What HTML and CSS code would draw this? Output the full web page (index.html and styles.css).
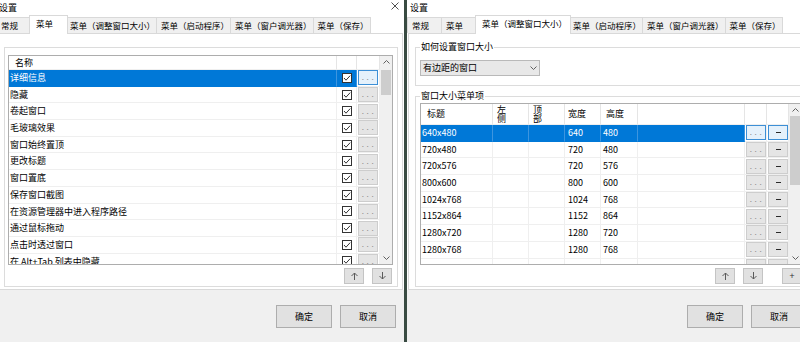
FILE: index.html
```html
<!DOCTYPE html>
<html lang="zh-CN">
<head>
<meta charset="utf-8">
<title>设置</title>
<link rel="stylesheet" href="styles.css">
</head>
<body>
<div class="screen">
  <section class="win win-left">
    <header class="titlebar">
      <span class="title">设置</span>
      <svg class="close" width="8" height="8" viewBox="0 0 8 8"><path d="M0.5 0.5L7.5 7.5M7.5 0.5L0.5 7.5" stroke="#3c3c3c" stroke-width="0.9" fill="none"/></svg>
    </header>
    <nav class="tabs">
      <div class="tab first">常规</div>
      <div class="tab sel">菜单</div>
      <div class="tab">菜单（调整窗口大小）</div>
      <div class="tab">菜单（启动程序）</div>
      <div class="tab">菜单（窗户调光器）</div>
      <div class="tab">菜单（保存）</div>
    </nav>
    <div class="page page-left">
      <div class="grp">
        <div class="lb lb-left">
          <div class="lb-rows">
            <div class="row row-l head"><div class="c h hname">名称</div><div class="c h"></div><div class="c h"></div></div>
            <div class="row row-l sel"><div class="c t">详细信息</div><div class="c cbc"><svg width="10" height="10" viewBox="0 0 10 10"><rect x="0.5" y="0.5" width="9" height="9" fill="#fff" stroke="#333"/><path d="M2 5L4 7.2L8.2 2.6" fill="none" stroke="#333"/></svg></div><div class="c bc"><span class="dots">...</span></div></div>
            <div class="row row-l"><div class="c t">隐藏</div><div class="c cbc"><svg width="10" height="10" viewBox="0 0 10 10"><rect x="0.5" y="0.5" width="9" height="9" fill="#fff" stroke="#333"/><path d="M2 5L4 7.2L8.2 2.6" fill="none" stroke="#333"/></svg></div><div class="c bc"><span class="dots">...</span></div></div>
            <div class="row row-l"><div class="c t">卷起窗口</div><div class="c cbc"><svg width="10" height="10" viewBox="0 0 10 10"><rect x="0.5" y="0.5" width="9" height="9" fill="#fff" stroke="#333"/><path d="M2 5L4 7.2L8.2 2.6" fill="none" stroke="#333"/></svg></div><div class="c bc"><span class="dots">...</span></div></div>
            <div class="row row-l"><div class="c t">毛玻璃效果</div><div class="c cbc"><svg width="10" height="10" viewBox="0 0 10 10"><rect x="0.5" y="0.5" width="9" height="9" fill="#fff" stroke="#333"/><path d="M2 5L4 7.2L8.2 2.6" fill="none" stroke="#333"/></svg></div><div class="c bc"><span class="dots">...</span></div></div>
            <div class="row row-l"><div class="c t">窗口始终置顶</div><div class="c cbc"><svg width="10" height="10" viewBox="0 0 10 10"><rect x="0.5" y="0.5" width="9" height="9" fill="#fff" stroke="#333"/><path d="M2 5L4 7.2L8.2 2.6" fill="none" stroke="#333"/></svg></div><div class="c bc"><span class="dots">...</span></div></div>
            <div class="row row-l"><div class="c t">更改标题</div><div class="c cbc"><svg width="10" height="10" viewBox="0 0 10 10"><rect x="0.5" y="0.5" width="9" height="9" fill="#fff" stroke="#333"/><path d="M2 5L4 7.2L8.2 2.6" fill="none" stroke="#333"/></svg></div><div class="c bc"><span class="dots">...</span></div></div>
            <div class="row row-l"><div class="c t">窗口置底</div><div class="c cbc"><svg width="10" height="10" viewBox="0 0 10 10"><rect x="0.5" y="0.5" width="9" height="9" fill="#fff" stroke="#333"/><path d="M2 5L4 7.2L8.2 2.6" fill="none" stroke="#333"/></svg></div><div class="c bc"><span class="dots">...</span></div></div>
            <div class="row row-l"><div class="c t">保存窗口截图</div><div class="c cbc"><svg width="10" height="10" viewBox="0 0 10 10"><rect x="0.5" y="0.5" width="9" height="9" fill="#fff" stroke="#333"/><path d="M2 5L4 7.2L8.2 2.6" fill="none" stroke="#333"/></svg></div><div class="c bc"><span class="dots">...</span></div></div>
            <div class="row row-l"><div class="c t">在资源管理器中进入程序路径</div><div class="c cbc"><svg width="10" height="10" viewBox="0 0 10 10"><rect x="0.5" y="0.5" width="9" height="9" fill="#fff" stroke="#333"/><path d="M2 5L4 7.2L8.2 2.6" fill="none" stroke="#333"/></svg></div><div class="c bc"><span class="dots">...</span></div></div>
            <div class="row row-l"><div class="c t">通过鼠标拖动</div><div class="c cbc"><svg width="10" height="10" viewBox="0 0 10 10"><rect x="0.5" y="0.5" width="9" height="9" fill="#fff" stroke="#333"/><path d="M2 5L4 7.2L8.2 2.6" fill="none" stroke="#333"/></svg></div><div class="c bc"><span class="dots">...</span></div></div>
            <div class="row row-l"><div class="c t">点击时透过窗口</div><div class="c cbc"><svg width="10" height="10" viewBox="0 0 10 10"><rect x="0.5" y="0.5" width="9" height="9" fill="#fff" stroke="#333"/><path d="M2 5L4 7.2L8.2 2.6" fill="none" stroke="#333"/></svg></div><div class="c bc"><span class="dots">...</span></div></div>
            <div class="row row-l"><div class="c t">在 Alt+Tab 列表中隐藏</div><div class="c cbc"><svg width="10" height="10" viewBox="0 0 10 10"><rect x="0.5" y="0.5" width="9" height="9" fill="#fff" stroke="#333"/><path d="M2 5L4 7.2L8.2 2.6" fill="none" stroke="#333"/></svg></div><div class="c bc"><span class="dots">...</span></div></div>
          </div>
          <div class="vs">
            <div class="ar"><svg width="7" height="4" viewBox="0 0 7 4"><path d="M0.5 3.5L3.5 0.5L6.5 3.5" fill="none" stroke="#606060"/></svg></div>
            <div class="thumb" style="margin-top:2px;height:25px"></div>
            <div class="vs-fill"></div>
            <div class="ar"><svg width="7" height="4" viewBox="0 0 7 4"><path d="M0.5 0.5L3.5 3.5L6.5 0.5" fill="none" stroke="#606060"/></svg></div>
          </div>
        </div>
        <div class="mvrow mvrow-left">
          <button class="mv"><svg width="7" height="8" viewBox="0 0 7 8"><path d="M3.5 8V1M0.5 4L3.5 1L6.5 4" fill="none" stroke="#5a5a5a"/></svg></button>
          <button class="mv"><svg width="7" height="8" viewBox="0 0 7 8"><path d="M3.5 0V7M0.5 4L3.5 7L6.5 4" fill="none" stroke="#5a5a5a"/></svg></button>
        </div>
      </div>
    </div>
    <footer class="footer"><button class="btn">确定</button><button class="btn">取消</button></footer>
  </section>

  <div class="sep"></div>

  <section class="win win-right">
    <header class="titlebar">
      <span class="title">设置</span>
      <svg class="close" width="8" height="8" viewBox="0 0 8 8"><path d="M0.5 0.5L7.5 7.5M7.5 0.5L0.5 7.5" stroke="#3c3c3c" stroke-width="0.9" fill="none"/></svg>
    </header>
    <nav class="tabs">
      <div class="tab first">常规</div>
      <div class="tab">菜单</div>
      <div class="tab sel">菜单（调整窗口大小）</div>
      <div class="tab">菜单（启动程序）</div>
      <div class="tab">菜单（窗户调光器）</div>
      <div class="tab">菜单（保存）</div>
    </nav>
    <div class="page page-right">
      <fieldset class="fs fs-1">
        <legend>如何设置窗口大小</legend>
        <div class="dd"><span>有边距的窗口</span><svg width="7" height="4" viewBox="0 0 7 4"><path d="M0.5 0.5L3.5 3.5L6.5 0.5" fill="none" stroke="#606060"/></svg></div>
      </fieldset>
      <fieldset class="fs fs-2">
        <legend>窗口大小菜单项</legend>
        <div class="lb lb-right">
          <div class="lb-rows">
            <div class="row row-r head"><div class="c h hname">标题</div><div class="c h hv"><span class="vt">左侧</span></div><div class="c h hv"><span class="vt">顶部</span></div><div class="c h hw">宽度</div><div class="c h hh">高度</div><div class="c h"></div><div class="c h"></div><div class="c h"></div></div>
            <div class="row row-r sel"><div class="c t">640x480</div><div class="c"></div><div class="c"></div><div class="c tw">640</div><div class="c th">480</div><div class="c"></div><div class="c bc"><span class="dots">...</span></div><div class="c bc"><span class="minus"><i></i></span></div></div>
            <div class="row row-r"><div class="c t">720x480</div><div class="c"></div><div class="c"></div><div class="c tw">720</div><div class="c th">480</div><div class="c"></div><div class="c bc"><span class="dots">...</span></div><div class="c bc"><span class="minus"><i></i></span></div></div>
            <div class="row row-r"><div class="c t">720x576</div><div class="c"></div><div class="c"></div><div class="c tw">720</div><div class="c th">576</div><div class="c"></div><div class="c bc"><span class="dots">...</span></div><div class="c bc"><span class="minus"><i></i></span></div></div>
            <div class="row row-r"><div class="c t">800x600</div><div class="c"></div><div class="c"></div><div class="c tw">800</div><div class="c th">600</div><div class="c"></div><div class="c bc"><span class="dots">...</span></div><div class="c bc"><span class="minus"><i></i></span></div></div>
            <div class="row row-r"><div class="c t">1024x768</div><div class="c"></div><div class="c"></div><div class="c tw">1024</div><div class="c th">768</div><div class="c"></div><div class="c bc"><span class="dots">...</span></div><div class="c bc"><span class="minus"><i></i></span></div></div>
            <div class="row row-r"><div class="c t">1152x864</div><div class="c"></div><div class="c"></div><div class="c tw">1152</div><div class="c th">864</div><div class="c"></div><div class="c bc"><span class="dots">...</span></div><div class="c bc"><span class="minus"><i></i></span></div></div>
            <div class="row row-r"><div class="c t">1280x720</div><div class="c"></div><div class="c"></div><div class="c tw">1280</div><div class="c th">720</div><div class="c"></div><div class="c bc"><span class="dots">...</span></div><div class="c bc"><span class="minus"><i></i></span></div></div>
            <div class="row row-r"><div class="c t">1280x768</div><div class="c"></div><div class="c"></div><div class="c tw">1280</div><div class="c th">768</div><div class="c"></div><div class="c bc"><span class="dots">...</span></div><div class="c bc"><span class="minus"><i></i></span></div></div>
            <div class="row row-r"><div class="c t"></div><div class="c"></div><div class="c"></div><div class="c tw"></div><div class="c th"></div><div class="c"></div><div class="c bc"><span class="dots">...</span></div><div class="c bc"><span class="minus"><i></i></span></div></div>
          </div>
          <div class="vs">
            <div class="ar"><svg width="7" height="4" viewBox="0 0 7 4"><path d="M0.5 3.5L3.5 0.5L6.5 3.5" fill="none" stroke="#606060"/></svg></div>
            <div class="thumb" style="margin-top:0;height:69px"></div>
            <div class="vs-fill"></div>
            <div class="ar"><svg width="7" height="4" viewBox="0 0 7 4"><path d="M0.5 0.5L3.5 3.5L6.5 0.5" fill="none" stroke="#606060"/></svg></div>
          </div>
        </div>
        <div class="mvrow">
          <button class="mv"><svg width="7" height="8" viewBox="0 0 7 8"><path d="M3.5 8V1M0.5 4L3.5 1L6.5 4" fill="none" stroke="#5a5a5a"/></svg></button>
          <button class="mv"><svg width="7" height="8" viewBox="0 0 7 8"><path d="M3.5 0V7M0.5 4L3.5 7L6.5 4" fill="none" stroke="#5a5a5a"/></svg></button>
          <button class="mv plus">+</button>
        </div>
      </fieldset>
    </div>
    <footer class="footer"><button class="btn">确定</button><button class="btn">取消</button></footer>
  </section>
</div>
</body>
</html>
```

FILE: styles.css
```css
* { box-sizing: border-box; }
html, body { margin: 0; padding: 0; }
body {
  width: 800px;
  height: 342px;
  overflow: hidden;
  background: #f0f0f0;
  font-family: "Noto Sans CJK SC", "Noto Sans", sans-serif;
  font-size: 9px;
  color: #000;
}
.screen {
  display: flex;
  width: 800px;
  height: 342px;
  overflow: hidden;
}
.win {
  flex: 0 0 408px;
  width: 408px;
  height: 342px;
  display: flex;
  flex-direction: column;
  background: #fff;
}
.win-left { margin-left: -4px; }
.sep {
  flex: 0 0 3px;
  background: #394b42;
}

/* title bar */
.titlebar {
  height: 15px;
  display: flex;
  align-items: center;
  justify-content: space-between;
  padding: 0 5px 0 3px;
}
.title { line-height: 14px; font-size: 9px; }
.close { display: block; margin-bottom: 3px; }

/* tabs */
.tabs {
  height: 18px;
  display: flex;
  align-items: flex-end;
  position: relative;
  z-index: 1;
}
.tab {
  height: 16px;
  min-width: 35px;
  padding: 0 1px 0 4px;
  line-height: 15px;
  font-size: 8.5px;
  white-space: nowrap;
  background: #f0f0f0;
  border-top: 1px solid #d9d9d9;
  border-right: 1px solid #d9d9d9;
}
.tab.first { border-left: 1px solid #d9d9d9; }
.tab.sel {
  height: 19px;
  min-width: 39px;
  margin: 0 -2px -1px;
  padding: 0 3px 3px 6px;
  background: #fff;
  border-left: 1px solid #d9d9d9;
  position: relative;
  z-index: 2;
}

/* tab page */
.page {
  height: 257px;
  margin: 0 1px;
  border: 1px solid #d9d9d9;
  background: #fff;
}
.page-left { padding: 13px 4px 0 6px; }
.page-right { padding: 7px 4px 0 6px; }

.grp {
  border: 1px solid #dcdcdc;
  padding: 7px 4px 2px 3px;
}

.fs {
  margin: 0;
  min-width: 0;
  border: 1px solid #dcdcdc;
}
.fs legend {
  padding: 0 1px;
  margin: 0;
  font-size: 9px;
  line-height: 12px;
}
.fs-1 { padding: 7px 4px 9px 4px; }
.fs-2 { margin-top: 4px; padding: 1px 6px 2px 4px; }

/* dropdown */
.dd {
  width: 120px;
  height: 16px;
  border: 1px solid #b9b9b9;
  background: #e8e8e8;
  display: flex;
  align-items: center;
  justify-content: space-between;
  padding: 0 2px 0 2px;
  line-height: 14px;
}
.dd svg { display: block; }

/* list boxes */
.lb {
  display: flex;
  border: 1px solid #adadad;
  background: #fff;
  overflow: hidden;
}
.lb-left { height: 210px; }
.lb-right { height: 162px; }
.lb-rows {
  flex: 1;
  min-width: 0;
  overflow: hidden;
}
.row {
  display: grid;
  height: 16.7px;
}
.row-l { grid-template-columns: 1fr 20px 23px; }
.row-r { grid-template-columns: 72px 36px 36px 36px 37px 1fr 22px 22px; }
.row-l.head { height: 14px; }
.row-r.head { height: 21px; }

.c {
  border-right: 1px solid #efefef;
  border-bottom: 1px solid #efefef;
  overflow: hidden;
  white-space: nowrap;
  line-height: 15.7px;
  min-width: 0;
}
.c.t { padding-left: 1px; }
.c.tw { padding-left: 3px; }
.c.th { padding-left: 2px; }
.c.h {
  border-right-color: #e5e5e5;
}
.row-l .c.h { line-height: 13px; }
.row-r .c.h { line-height: 20px; }
.c.hname { padding-left: 6px; }
.row-r .c.hv {
  padding: 1px 0 0 4px;
}
.vt {
  display: block;
  writing-mode: vertical-rl;
  text-orientation: upright;
  font-size: 9px;
  line-height: 9px;
  width: 9px;
}
.c.hw { padding-left: 3px; }
.c.hh { padding-left: 5px; }

.row.sel .c {
  background: #0078d7;
  color: #fff;
  border-right-color: #3d95df;
  border-bottom-color: #0078d7;
}
.row.sel .c.bc {
  background: #fff;
  border-right-color: #efefef;
  border-bottom-color: #efefef;
}

.cbc {
  display: flex;
  align-items: center;
  justify-content: center;
}
.cbc svg { display: block; }

.bc {
  display: flex;
  align-items: center;
  padding-left: 1px;
}
.dots {
  display: block;
  width: 20px;
  height: 15px;
  background: #e5e5e5;
  border: 1px solid #cdcdcd;
  color: #8a8a8a;
  font-size: 8px;
  line-height: 11px;
  letter-spacing: 2.6px;
  text-align: center;
  padding-left: 2px;
}
.minus {
  display: flex;
  align-items: center;
  justify-content: center;
  width: 20px;
  height: 15px;
  background: #e5e5e5;
  border: 1px solid #cdcdcd;
}
.minus i {
  display: block;
  width: 5px;
  height: 1px;
  background: #2a2a2a;
}
.row.sel .dots, .row.sel .minus {
  border-color: #3c8fd6;
  background: #e5f1fb;
}

/* vertical scrollbar */
.vs {
  flex: 0 0 12px;
  width: 12px;
  background: #f0f0f0;
  display: flex;
  flex-direction: column;
  align-items: center;
}
.vs .ar {
  width: 12px;
  height: 12px;
  display: flex;
  align-items: center;
  justify-content: center;
}
.vs .ar svg { display: block; }
.thumb {
  width: 10px;
  background: #cdcdcd;
}
.vs-fill { flex: 1; }

/* move buttons */
.mvrow {
  display: flex;
  justify-content: flex-end;
  gap: 8px;
  margin-top: 3px;
}
.mvrow-left { padding-right: 1px; }
.mv {
  width: 20px;
  height: 16px;
  margin: 0;
  padding: 0;
  background: #e1e1e1;
  border: 1px solid #c4c4c4;
  display: flex;
  align-items: center;
  justify-content: center;
  font: inherit;
  font-size: 9px;
  color: #333;
}
.mv svg { display: block; }
.mv.plus { margin-left: 11px; line-height: 14px; }

/* footer */
.footer {
  flex: 1;
  background: #f0f0f0;
  display: flex;
  justify-content: flex-end;
  align-items: flex-start;
  gap: 8px;
  padding: 15px 8px 0 0;
}
.btn {
  width: 56px;
  height: 23px;
  margin: 0;
  padding: 0;
  background: #e1e1e1;
  border: 1px solid #adadad;
  font: inherit;
  font-size: 9px;
  color: #000;
}
```
